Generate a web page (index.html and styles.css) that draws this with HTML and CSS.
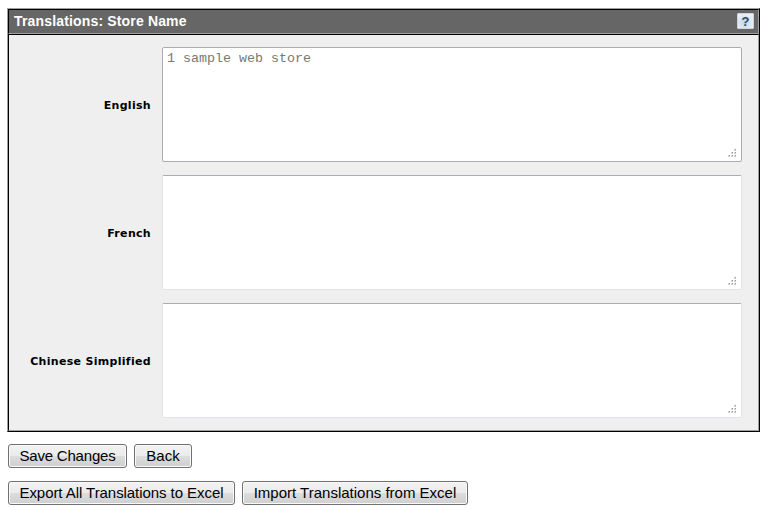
FILE: index.html
```html
<!DOCTYPE html>
<html lang="en">
<head>
<meta charset="utf-8">
<title>Translations: Store Name</title>
<link rel="stylesheet" href="styles.css">
</head>
<body>
<svg width="0" height="0" class="defs">
  <symbol id="grip" viewBox="0 0 8 8">
    <path fill="#d0d0d0" d="M6 0h2v2h-2zM3 3h2v2h-2zM6 3h2v2h-2zM0 6h2v2h-2zM3 6h2v2h-2zM6 6h2v2h-2z"/>
    <path fill="#a0a0a0" d="M7 0h1v1h-1zM4 3h1v1h-1zM7 3h1v1h-1zM1 6h1v1h-1zM4 6h1v1h-1zM7 6h1v1h-1z"/>
  </symbol>
</svg>
<section class="panel">
  <header class="panel-head">
    <h1>Translations: Store Name</h1>
    <span class="help">?</span>
  </header>
  <div class="panel-body">
    <label class="label" for="en">English</label>
    <div class="field"><textarea id="en" class="hover">1 sample web store</textarea><svg class="grip"><use href="#grip"/></svg></div>
    <label class="label" for="fr">French</label>
    <div class="field"><textarea id="fr"></textarea><svg class="grip"><use href="#grip"/></svg></div>
    <label class="label" for="zh">Chinese Simplified</label>
    <div class="field"><textarea id="zh"></textarea><svg class="grip"><use href="#grip"/></svg></div>
  </div>
</section>
<div class="actions">
  <button class="save">Save Changes</button>
  <button class="back">Back</button>
</div>
<div class="actions">
  <button class="export">Export All Translations to Excel</button>
  <button class="import">Import Translations from Excel</button>
</div>
</body>
</html>
```
FILE: styles.css
```css
* { box-sizing: border-box; }
body { margin: 8px 7px 0; background: #fff; font-family: "Liberation Sans", Arial, sans-serif; overflow: hidden; }
.defs { position: absolute; }
.panel { width: 753px; border: 1px solid #000; border-top-color: #a0a0a0; border-left-color: #a0a0a0; margin-bottom: 12px; }
.panel-head { display: flex; align-items: center; justify-content: space-between; height: 25px; padding: 0 5px; background: #666; border: 1px solid #000; border-right-color: #a0a0a0; border-bottom-color: #a0a0a0; }
h1 { margin: 0; font-size: 14px; line-height: 23px; font-weight: bold; letter-spacing: 0.16px; color: #fff; }
.help { width: 17px; height: 16px; margin: -2px -1px 0 0; border: 1px solid #d2d2d2; border-radius: 1px; background: radial-gradient(circle at 45% 60%, #b5d6f5, #dfebf7 60%, #f5f5f5); color: #3c4350; font-size: 13px; font-weight: bold; line-height: 15px; text-align: center; }
.panel-body { display: grid; grid-template-columns: 142px 580px; column-gap: 11px; row-gap: 13px; height: 397px; padding-top: 12px; align-content: start; background: #efefef; border: 1px solid #a0a0a0; border-top-color: #000; border-left-color: #000; }
.label { align-self: center; padding-top: 2px; text-align: right; font: bold 11px/14px "DejaVu Sans", Verdana, sans-serif; letter-spacing: 0.31px; color: #000; white-space: nowrap; }
.field { position: relative; height: 115px; }
textarea { display: block; width: 580px; height: 115px; margin: 0; padding: 3px 4px; resize: none; border: 1px solid #e2e3ea; border-top-color: #abadb3; border-radius: 2px; outline: 0; background: #fff; color: #777; font: 13.33px/15px "Liberation Mono", "Courier New", monospace; }
textarea.hover { border-color: #abadb3; }
.grip { position: absolute; right: 6px; bottom: 5px; width: 8px; height: 8px; }
.actions { display: flex; gap: 7px; margin: 0 0 13px 1px; }
button { height: 24px; padding: 0; border: 1px solid #707070; border-radius: 3px; box-shadow: inset 0 0 0 1px #fafafa; background: linear-gradient(#f2f2f2, #ebebeb 50%, #ddd 50%, #cfcfcf); color: #000; font: 15px/20px "Liberation Sans", Arial, sans-serif; white-space: nowrap; }
.save { width: 119px; letter-spacing: -0.2px; }
.back { width: 58px; }
.export { width: 227px; letter-spacing: -0.06px; }
.import { width: 226px; }
```
